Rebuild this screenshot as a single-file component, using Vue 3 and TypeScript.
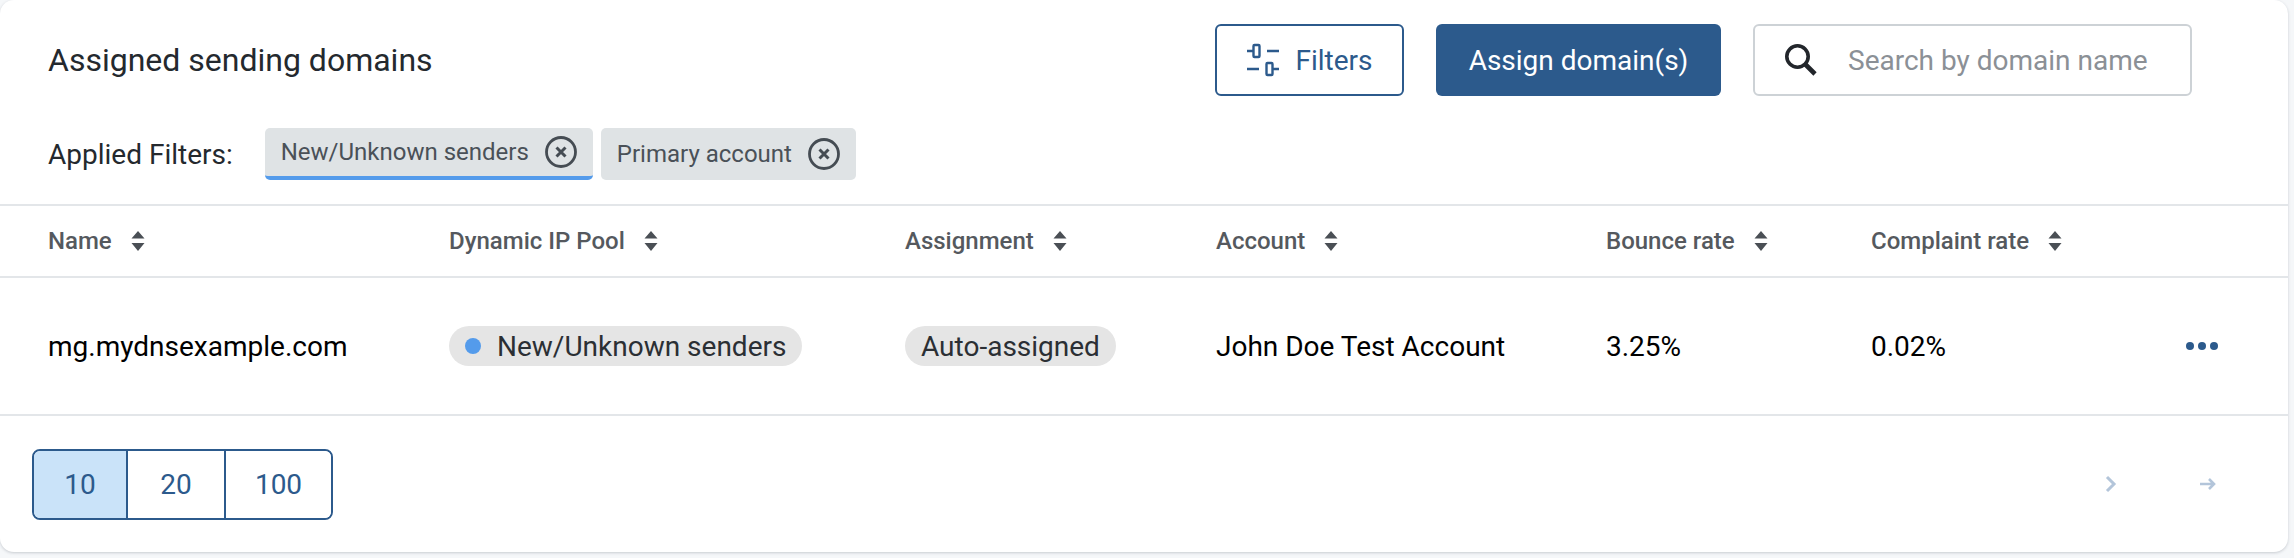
<template>
  <div class="page">
    <section class="card">
      <header class="head">
        <div class="head-top">
          <h2 class="title">Assigned sending domains</h2>
          <div class="actions">
            <button class="btn btn-outline">
              <svg class="filter-icon" viewBox="0 0 34 34" fill="none" stroke="currentColor" stroke-width="2.4">
                <path d="M1 8h6M21 8h12M1 26h12M27 26h6" />
                <rect x="7.5" y="2" width="6" height="12" rx="1" />
                <rect x="20.5" y="20" width="6" height="12" rx="1" />
              </svg>
              Filters
            </button>
            <button class="btn btn-solid">Assign domain(s)</button>
            <label class="search">
              <svg class="search-icon" viewBox="0 0 32 32" fill="none" stroke="#22262b">
                <circle cx="12.5" cy="12.5" r="10.7" stroke-width="3.6" />
                <path d="M20.5 20.5L30 30" stroke-width="4.6" />
              </svg>
              <input type="text" placeholder="Search by domain name" />
            </label>
          </div>
        </div>
        <div class="applied">
          <span class="applied-label">Applied Filters:</span>
          <div class="chips">
            <span v-for="chip in chips" :key="chip.label" class="chip" :class="{ marked: chip.marked }">
              {{ chip.label }}
              <svg class="chip-x" viewBox="0 0 32 32" fill="none" stroke="#454c53">
                <circle cx="16" cy="16" r="14.5" stroke-width="2.8" />
                <path d="M11.5 11.5l9 9M20.5 11.5l-9 9" stroke-width="3" />
              </svg>
            </span>
          </div>
        </div>
      </header>

      <div class="grid columns">
        <div v-for="col in columns" :key="col" class="col">
          {{ col }}
          <svg class="sort" viewBox="0 0 14 20" fill="#4a4f55">
            <path d="M7 0l6.5 7.5H.5zM7 20L.5 12h13z" />
          </svg>
        </div>
        <div></div>
      </div>

      <div class="grid row">
        <div>mg.mydnsexample.com</div>
        <div><span class="pill"><i class="dot"></i>New/Unknown senders</span></div>
        <div><span class="pill">Auto-assigned</span></div>
        <div>John Doe Test Account</div>
        <div>3.25%</div>
        <div>0.02%</div>
        <div class="more"><i></i><i></i><i></i></div>
      </div>

      <footer class="foot">
        <div class="sizes">
          <button v-for="size in sizes" :key="size" class="size" :class="{ on: size === 10 }">{{ size }}</button>
        </div>
        <div class="pager">
          <svg class="chev" viewBox="0 0 12 18" fill="none" stroke="#b3c5da" stroke-width="3">
            <path d="M2 2l7 7-7 7" />
          </svg>
          <svg class="arrow" viewBox="0 0 16 12" fill="none" stroke="#b3c5da" stroke-width="2.6">
            <path d="M0 6h14M9 1l5 5-5 5" />
          </svg>
        </div>
      </footer>
    </section>
  </div>
</template>

<script setup lang="ts">
const chips = [
  { label: 'New/Unknown senders', marked: true },
  { label: 'Primary account', marked: false },
]
const columns = ['Name', 'Dynamic IP Pool', 'Assignment', 'Account', 'Bounce rate', 'Complaint rate']
const sizes = [10, 20, 100]
</script>

<style>
html,
body {
  margin: 0;
  background: #f5f7f9;
}
</style>

<style scoped>
.page {
  width: 2294px;
  height: 558px;
  overflow: hidden;
  font-family: Roboto, "Liberation Sans", sans-serif;
}

.card {
  width: 2288px;
  height: 552px;
  box-sizing: border-box;
  display: flex;
  flex-direction: column;
  background: #fff;
  border-radius: 14px;
  box-shadow: 0 1px 3px rgba(40, 50, 70, 0.22);
}

.head {
  padding: 24px 96px 24px 48px;
  border-bottom: 2px solid #e3e6e9;
  height: 206px;
  box-sizing: border-box;
}

.head-top {
  display: flex;
  align-items: center;
  justify-content: space-between;
}

.title {
  margin: 0;
  font-size: 32px;
  font-weight: 400;
  color: #24292e;
}

.actions {
  display: flex;
  gap: 32px;
}

.btn {
  height: 72px;
  font: inherit;
  font-size: 28px;
  border-radius: 6px;
  display: flex;
  align-items: center;
  justify-content: center;
  box-sizing: border-box;
}

.btn-outline {
  width: 189px;
  gap: 15px;
  color: #2c5a8c;
  background: #fff;
  border: 2px solid #2c5a8c;
}

.filter-icon {
  width: 34px;
  height: 34px;
}

.btn-solid {
  width: 285px;
  color: #fff;
  background: #2c5a8c;
  border: 0;
}

.search {
  width: 439px;
  height: 72px;
  box-sizing: border-box;
  display: flex;
  align-items: center;
  gap: 31px;
  padding-left: 30px;
  border: 2px solid #cdd2d6;
  border-radius: 6px;
}

.search-icon {
  width: 32px;
  height: 32px;
  flex: none;
}

.search input {
  width: 340px;
  border: 0;
  outline: 0;
  padding: 0;
  font: inherit;
  font-size: 28px;
}

.search input::placeholder {
  color: #8b9096;
  opacity: 1;
}

.applied {
  display: flex;
  align-items: center;
  gap: 32px;
  margin-top: 32px;
}

.applied-label {
  font-size: 28px;
  color: #24292e;
}

.chips {
  display: flex;
  gap: 8px;
}

.chip {
  height: 52px;
  box-sizing: border-box;
  display: flex;
  align-items: center;
  gap: 16px;
  padding: 0 16px;
  background: #dfe3e5;
  border-radius: 5px;
  font-size: 24px;
  color: #4a5158;
}

.chip.marked {
  border-bottom: 4px solid #549beb;
}

.chip-x {
  width: 32px;
  height: 32px;
}

.grid {
  display: grid;
  grid-template-columns: 401px 456px 311px 390px 265px 315px 1fr;
  align-items: center;
  padding-left: 48px;
}

.columns {
  height: 72px;
  border-bottom: 2px solid #e3e6e9;
  box-sizing: border-box;
}

.col {
  display: flex;
  align-items: center;
  gap: 19px;
  font-size: 24px;
  font-weight: 500;
  color: #55595e;
}

.sort {
  width: 14px;
  height: 20px;
}

.row {
  height: 138px;
  box-sizing: border-box;
  border-bottom: 2px solid #e3e6e9;
  font-size: 28px;
  color: #000;
}

.pill {
  display: inline-flex;
  align-items: center;
  height: 40px;
  padding: 0 16px;
  background: #e5e5e5;
  border-radius: 20px;
  color: #2b2f34;
}

.dot {
  width: 16px;
  height: 16px;
  margin-right: 16px;
  border-radius: 50%;
  background: #549beb;
}

.more {
  display: flex;
  gap: 4px;
}

.more i {
  width: 8px;
  height: 8px;
  border-radius: 50%;
  background: #2c5a8c;
}

.foot {
  flex: 1;
  display: flex;
  align-items: center;
  justify-content: space-between;
  padding: 0 72px 0 32px;
}

.sizes {
  display: flex;
  height: 71px;
  width: 301px;
  box-sizing: border-box;
  border: 2px solid #2c5a8c;
  border-radius: 8px;
  overflow: hidden;
}

.size {
  font: inherit;
  font-size: 28px;
  color: #2c5a8c;
  background: #fff;
  border: 0;
  border-right: 2px solid #2c5a8c;
  width: 98px;
  padding: 0;
}

.size:last-child {
  border-right: 0;
  flex: 1;
}

.size.on {
  width: 94px;
  background: #cae3f9;
}

.pager {
  display: flex;
  align-items: center;
  gap: 83px;
}

.chev {
  width: 12px;
  height: 18px;
}

.arrow {
  width: 16px;
  height: 12px;
}
</style>
